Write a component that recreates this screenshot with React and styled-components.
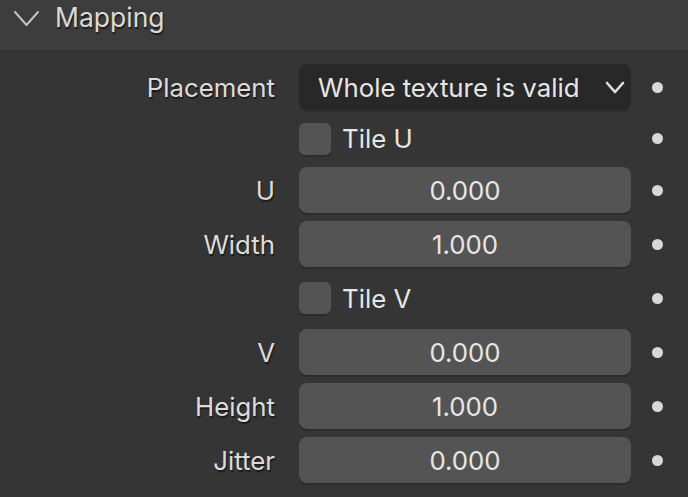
import React from 'react';
import styled, { createGlobalStyle } from 'styled-components';

const Global = createGlobalStyle`
  html, body {
    margin: 0;
    padding: 0;
    background: #353535;
  }
  body {
    font-family: Inter, "Noto Sans", sans-serif;
    color: #e0e0e0;
    -webkit-font-smoothing: antialiased;
  }
`;

const Panel = styled.div`
  width: 688px;
  height: 497px;
  background: #353535;
  overflow: hidden;
`;

const Header = styled.div`
  height: 51px;
  box-sizing: border-box;
  background: #3d3d3d;
  display: flex;
  align-items: flex-start;
  padding-left: 13px;
  gap: 15px;
  border-bottom: 1px solid #333;
`;

const HeaderIcon = styled.div`
  margin-top: 10px;
  display: flex;
`;

const HeaderTitle = styled.span`
  font-size: 26.5px;
  line-height: 34px;
  color: #dadada;
  text-shadow: 1px 2px 1px rgba(0, 0, 0, 0.55);
`;

const Body = styled.div`
  display: flex;
  flex-direction: column;
  gap: 8px;
  padding-top: 13px;
`;

const Row = styled.div`
  display: flex;
  align-items: center;
  height: ${p => p.$h || 46}px;
`;

const Label = styled.div`
  width: 275px;
  text-align: right;
  font-size: 25.8px;
  color: #dcdcdc;
  text-shadow: 1px 2px 1px rgba(0, 0, 0, 0.5);
  box-sizing: border-box;
`;

const Control = styled.div`
  margin-left: 24px;
  width: 332px;
  height: 100%;
  display: flex;
  align-items: center;
`;

const NumField = styled.div`
  width: 100%;
  height: 46px;
  box-sizing: border-box;
  background: #545454;
  border-radius: 8px;
  box-shadow: 0 2px 0 #2c2c2c;
  display: flex;
  align-items: center;
  justify-content: center;
  font-size: 25.8px;
  color: #e6e6e6;
  padding-top: 1px;
`;

const Select = styled(NumField)`
  background: #282828;
  justify-content: space-between;
  padding: 0 6px 0 19px;
  box-shadow: 0 2px 0 #2e2e2e;
`;

const Check = styled.div`
  width: 32px;
  height: 32px;
  box-sizing: border-box;
  border-radius: 6px;
  background: #545454;
  box-shadow: 0 2px 0 #2c2c2c;
  flex-shrink: 0;
`;

const CheckLabel = styled.span`
  font-size: 25.8px;
  color: #e6e6e6;
  margin-left: 11px;
`;

const Dot = styled.div`
  width: 11px;
  height: 11px;
  border-radius: 50%;
  background: #d8d8d8;
  margin-left: 21px;
`;

const Chevron = ({ w = 24, h = 14, color = '#c4c4c4', width = 2.4 }) => (
  <svg width={w} height={h} viewBox={`0 0 ${w} ${h}`} fill="none">
    <path
      d={`M2 2 L${w / 2} ${h - 2} L${w - 2} 2`}
      stroke={color}
      strokeWidth={width}
      strokeLinecap="round"
      strokeLinejoin="round"
    />
  </svg>
);

const NumberRow = ({ label, value }) => (
  <Row>
    <Label>{label}</Label>
    <Control>
      <NumField>{value}</NumField>
    </Control>
    <Dot />
  </Row>
);

const CheckRow = ({ label, h }) => (
  <Row $h={h}>
    <Label />
    <Control>
      <Check />
      <CheckLabel>{label}</CheckLabel>
    </Control>
    <Dot />
  </Row>
);

export default function App() {
  return (
    <Panel>
      <Global />
      <Header>
        <HeaderIcon>
          <Chevron w={27} h={17} width={2} />
        </HeaderIcon>
        <HeaderTitle>Mapping</HeaderTitle>
      </Header>
      <Body>
        <Row>
          <Label>Placement</Label>
          <Control>
            <Select>
              <span>Whole texture is valid</span>
              <Chevron w={20} h={13} color="#e0e0e0" width={2.6} />
            </Select>
          </Control>
          <Dot />
        </Row>
        <CheckRow label="Tile U" h={41} />
        <NumberRow label="U" value="0.000" />
        <NumberRow label="Width" value="1.000" />
        <CheckRow label="Tile V" />
        <NumberRow label="V" value="0.000" />
        <NumberRow label="Height" value="1.000" />
        <NumberRow label="Jitter" value="0.000" />
      </Body>
    </Panel>
  );
}
